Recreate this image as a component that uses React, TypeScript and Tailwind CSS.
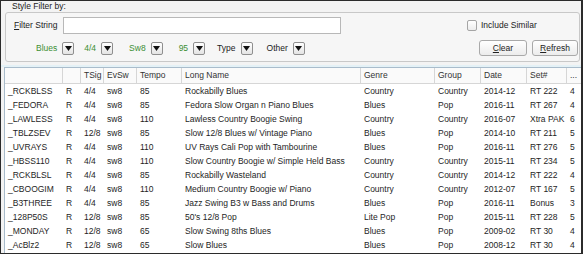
import React from "react";

const rows = [
  ["_RCKBLSS", "R", "4/4", "sw8", "85", "Rockabilly Blues", "Country", "Country", "2014-12", "RT 222", "4"],
  ["_FEDORA", "R", "4/4", "sw8", "85", "Fedora Slow Organ n Piano Blues", "Blues", "Pop", "2016-11", "RT 267", "4"],
  ["_LAWLESS", "R", "4/4", "sw8", "110", "Lawless Country Boogie Swing", "Country", "Country", "2016-07", "Xtra PAK", "6"],
  ["_TBLZSEV", "R", "12/8", "sw8", "85", "Slow 12/8 Blues w/ Vintage Piano", "Blues", "Pop", "2014-10", "RT 211", "5"],
  ["_UVRAYS", "R", "4/4", "sw8", "110", "UV Rays Cali Pop with Tambourine", "Blues", "Pop", "2016-11", "RT 276", "5"],
  ["_HBSS110", "R", "4/4", "sw8", "110", "Slow Country Boogie w/ Simple Held Bass", "Country", "Country", "2015-11", "RT 234", "5"],
  ["_RCKBLSL", "R", "4/4", "sw8", "85", "Rockabilly Wasteland", "Country", "Country", "2014-12", "RT 222", "4"],
  ["_CBOOGIM", "R", "4/4", "sw8", "110", "Medium Country Boogie w/ Piano", "Country", "Country", "2012-07", "RT 167", "5"],
  ["_B3THREE", "R", "4/4", "sw8", "85", "Jazz Swing B3 w Bass and Drums", "Blues", "Pop", "2016-11", "Bonus", "3"],
  ["_128P50S", "R", "12/8", "sw8", "85", "50's 12/8 Pop", "Lite Pop", "Pop", "2015-11", "RT 228", "5"],
  ["_MONDAY", "R", "12/8", "sw8", "65", "Slow Swing 8ths Blues", "Blues", "Pop", "2009-02", "RT 30", "4"],
  ["_AcBlz2", "R", "12/8", "sw8", "65", "Slow Blues", "Blues", "Pop", "2008-12", "RT 30", "4"],
];

const headers = ["", "", "TSig", "EvSw", "Tempo", "Long Name", "Genre", "Group", "Date", "Set#", "..."];

const cols = "grid grid-cols-[58px_18px_23px_33px_45px_179px_74px_46px_46px_40px_13px]";

function DropButton() {
  return (
    <span className="flex h-[13px] w-[12px] items-center justify-center rounded-[2px] border border-[#8f8f8f] bg-gradient-to-b from-white to-[#e4e4e4]">
      <svg width="7" height="5" viewBox="0 0 7 5">
        <path d="M0 0 H7 L3.5 5 Z" fill="#111" />
      </svg>
    </span>
  );
}

function Filter({ label, green }: { label: string; green?: boolean }) {
  return (
    <div className="flex items-center gap-[5px]">
      <span className={green ? "text-[#3c8f34]" : "text-[#222]"}>{label}</span>
      <DropButton />
    </div>
  );
}

export default function App() {
  return (
    <div className="box-border h-[254px] w-[583px] overflow-hidden border border-r-2 border-[#2b2b2b] bg-[#f3f3f3] font-['Liberation_Sans',Arial,sans-serif] text-[8.5px] leading-none text-[#1e1e1e]">
      <div className="flex h-[11px] items-center pl-[11px] text-[#222]">Style Filter by:</div>

      {/* group box */}
      <div className="ml-[4px] mr-[1px] h-[50px] rounded-[3px] border border-[#c8c8c8] bg-[#f6f6f6]">
        <div className="flex items-center pt-[4px]">
          <span className="w-[57px] shrink-0 whitespace-nowrap pl-[8px] text-[#222]">
            <span className="underline">F</span>ilter String
          </span>
          <div className="h-[17px] w-[278px] shrink-0 border border-[#b8b8b8] bg-white" />
          <div className="ml-[126px] flex items-center gap-[4px]">
            <span className="h-[11px] w-[10px] rounded-[2px] border border-[#a5a5a5] bg-gradient-to-b from-white to-[#ececec]" />
            <span className="whitespace-nowrap text-[#222]">Include Similar</span>
          </div>
        </div>
        <div className="flex items-center pt-[6px]">
          <div className="flex items-center gap-[10px] pl-[30px]">
            <Filter label="Blues" green />
            <Filter label="4/4" green />
            <div className="pl-[6px]">
              <Filter label="Sw8" green />
            </div>
            <div className="pl-[6px]">
              <Filter label="95" green />
            </div>
            <div className="pl-[2px]">
              <Filter label="Type" />
            </div>
            <div className="pl-[4px]">
              <Filter label="Other" />
            </div>
          </div>
          <div className="ml-auto mr-[1px] flex gap-[5px]">
            <button className="flex h-[16px] w-[48px] items-center justify-center rounded-[3px] border border-[#a9a9a9] bg-gradient-to-b from-white to-[#ececec] text-[#222]">
              <span className="underline">C</span>lear
            </button>
            <button className="flex h-[16px] w-[46px] items-center justify-center rounded-[3px] border border-[#a9a9a9] bg-gradient-to-b from-white to-[#ececec] text-[#222]">
              <span className="underline">R</span>efresh
            </button>
          </div>
        </div>
      </div>

      {/* table */}
      <div className="mt-[3px] h-[2px] bg-[#e4f1f6]" />
      <div className="ml-[3px] h-[200px] border-l border-t border-[#a9bccb] bg-white">
        <div className={`${cols} h-[16px] border-b border-[#d6d6d6] bg-[#fafafa] text-[#333]`}>
          {headers.map((h, i) => (
            <div key={i} className="flex items-center border-r border-[#d6d6d6] pl-[3px] last:border-r-0">
              {h}
            </div>
          ))}
        </div>
        {rows.map((r, i) => (
          <div key={i} className={`${cols} h-[14px]`}>
            {r.map((c, j) => (
              <div key={j} className="flex items-center overflow-hidden whitespace-nowrap pl-[3px]">
                {c}
              </div>
            ))}
          </div>
        ))}
      </div>
    </div>
  );
}
